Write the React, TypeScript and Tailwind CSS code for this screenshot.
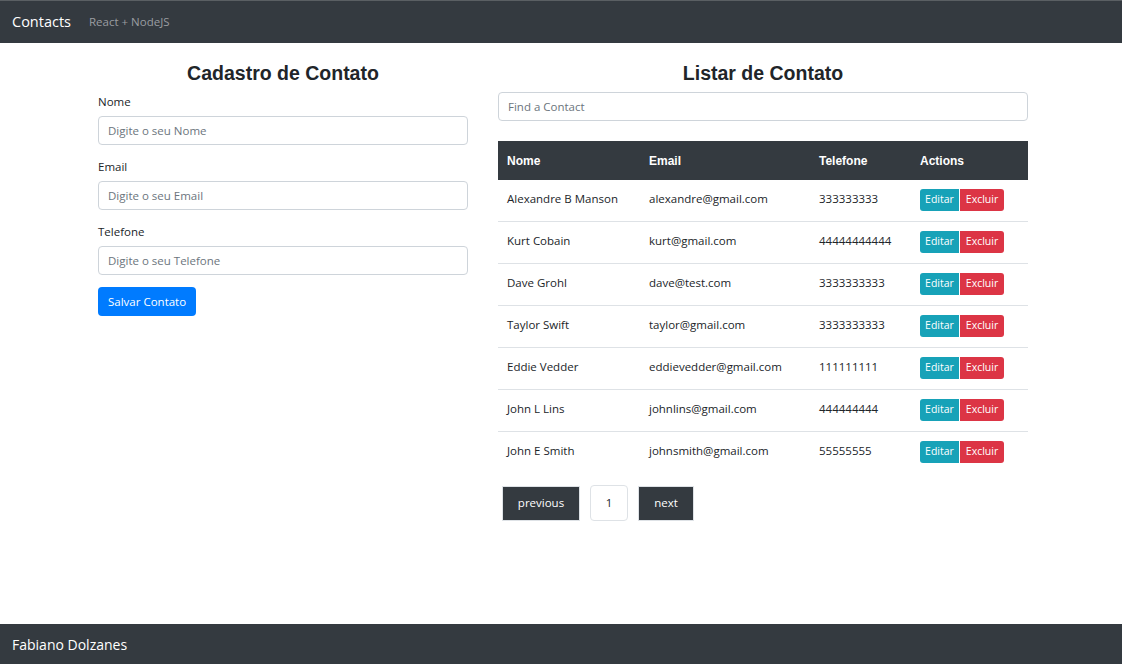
import React from "react";

const contacts = [
  { nome: "Alexandre B Manson", email: "alexandre@gmail.com", tel: "333333333" },
  { nome: "Kurt Cobain", email: "kurt@gmail.com", tel: "44444444444" },
  { nome: "Dave Grohl", email: "dave@test.com", tel: "3333333333" },
  { nome: "Taylor Swift", email: "taylor@gmail.com", tel: "3333333333" },
  { nome: "Eddie Vedder", email: "eddievedder@gmail.com", tel: "111111111" },
  { nome: "John L Lins", email: "johnlins@gmail.com", tel: "444444444" },
  { nome: "John E Smith", email: "johnsmith@gmail.com", tel: "55555555" },
];

const font = "font-['Open_Sans',sans-serif]";

function Field({ label, placeholder }: { label: string; placeholder: string }) {
  return (
    <div className="flex flex-col">
      <label className="text-[11.5px] text-[#212529] leading-[16px] mb-[6px]">{label}</label>
      <input
        className="h-[29px] w-full border border-[#ced4da] rounded-[4px] px-[9px] text-[11.5px] text-[#495057] placeholder:text-[#6c757d] outline-none"
        placeholder={placeholder}
      />
    </div>
  );
}

export default function App() {
  return (
    <div className={`min-h-[664px] flex flex-col bg-white ${font}`}>
      <nav className="h-[43px] bg-[#343a40] border-t border-[#5a5f63] flex items-center px-[12px] gap-[18px]">
        <span className="text-white text-[14.5px]">Contacts</span>
        <span className="text-[#9a9da0] text-[11.5px]">React + NodeJS</span>
      </nav>
      <main className="flex-1 flex justify-center pt-[18px] gap-[30px] pl-[4px]">
        <section className="w-[370px] flex flex-col">
          <h2 className="text-center font-['Liberation_Sans',sans-serif] font-bold text-[19.5px] text-[#212529] leading-[24px] mb-[9px]">
            Cadastro de Contato
          </h2>
          <div className="flex flex-col gap-[14px]">
            <Field label="Nome" placeholder="Digite o seu Nome" />
            <Field label="Email" placeholder="Digite o seu Email" />
            <Field label="Telefone" placeholder="Digite o seu Telefone" />
          </div>
          <button className="mt-[12px] self-start h-[29px] px-[10px] bg-[#007bff] text-white text-[11.5px] rounded-[4px]">
            Salvar Contato
          </button>
        </section>
        <section className="w-[530px] flex flex-col">
          <h2 className="text-center font-['Liberation_Sans',sans-serif] font-bold text-[19.5px] text-[#212529] leading-[24px] mb-[7px]">
            Listar de Contato
          </h2>
          <input
            className="h-[29px] w-full border border-[#ced4da] rounded-[4px] px-[9px] text-[11.5px] placeholder:text-[#6c757d] outline-none"
            placeholder="Find a Contact"
          />
          <table className="mt-[20px] w-full text-[11.5px] text-[#212529] border-collapse">
            <thead>
              <tr className="bg-[#343a40] text-white h-[39px] font-['Liberation_Sans',sans-serif] font-bold text-[12px]">
                <th className="text-left pl-[9px] w-[142px]">Nome</th>
                <th className="text-left pl-[9px] w-[170px]">Email</th>
                <th className="text-left pl-[9px] w-[101px]">Telefone</th>
                <th className="text-left pl-[9px]">Actions</th>
              </tr>
            </thead>
            <tbody>
              {contacts.map((c, i) => (
                <tr key={i} className={i > 0 ? "h-[42px] border-t border-[#dee2e6]" : "h-[41px]"}>
                  <td className="pl-[9px] pb-[3px]">{c.nome}</td>
                  <td className="pl-[9px] pb-[3px]">{c.email}</td>
                  <td className="pl-[9px] pb-[3px]">{c.tel}</td>
                  <td className="pl-[9px]">
                    <div className="flex">
                      <button className="h-[22px] w-[39px] bg-[#17a2b8] text-white text-[10.5px] rounded-l-[3px] mr-[1px]">Editar</button>
                      <button className="h-[22px] w-[44px] bg-[#dc3545] text-white text-[10.5px] rounded-r-[3px]">Excluir</button>
                    </div>
                  </td>
                </tr>
              ))}
            </tbody>
          </table>
          <div className="flex items-center gap-[10px] mt-[12px] ml-[4px]">
            <button className="h-[35px] w-[78px] bg-[#343a40] text-white text-[11.5px] border border-[#dee2e6]">previous</button>
            <button className="h-[36px] w-[38px] bg-white text-[#212529] text-[11.5px] border border-[#dee2e6] rounded-[4px]">1</button>
            <button className="h-[35px] w-[56px] bg-[#343a40] text-white text-[11.5px] border border-[#dee2e6]">next</button>
          </div>
        </section>
      </main>
      <footer className="h-[40px] bg-[#343a40] flex items-center px-[12px]">
        <span className="text-white text-[14px]">Fabiano Dolzanes</span>
      </footer>
    </div>
  );
}
